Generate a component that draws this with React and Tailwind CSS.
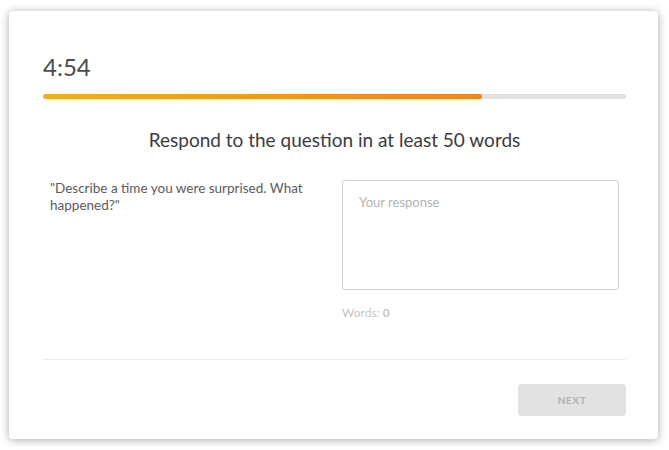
export default function App() {
    return (
        <div className="w-[669px] h-[450px] bg-white pt-[11px] pl-[9px]" style={{ fontFamily: 'Lato, "Open Sans", sans-serif' }}>
            <div className="w-[649px] h-[428px] rounded-[4px] bg-white shadow-[0_1px_8px_rgba(0,0,0,0.35)] pl-[34px] pr-[32px] pt-[40px] flex flex-col">
                <div className="text-[24px] leading-[32px] text-[#4b4b4b]">4:54</div>
                <div className="mt-[11px] h-[5px] w-full rounded-full bg-[#e0e0e0] overflow-hidden">
                    <div className="h-full w-[439px] rounded-full bg-gradient-to-r from-[#fbaa1f] to-[#f7821b]" />
                </div>
                <h1 className="mt-[27px] text-center text-[19px] leading-[28px] text-[#3c3c3c]">Respond to the question in at least 50 words</h1>
                <div className="mt-[26px] flex">
                    <div className="w-[299px] pl-[7px] pr-[16px] text-[13.5px] leading-[17px] text-[#5b5b5b]">
                        "Describe a time you were surprised. What happened?"
                    </div>
                    <div className="w-[277px]">
                        <textarea
                            placeholder="Your response"
                            className="block w-full h-[110px] resize-none rounded-[3px] border border-[#d0d0d0] px-[16px] py-[13px] text-[13px] leading-[17px] text-[#4b4b4b] placeholder:text-[#b4b4b4] outline-none"
                        />
                        <div className="mt-[15px] text-[12px] leading-[16px] text-[#c4c4c4]">
                            Words: <span className="font-bold">0</span>
                        </div>
                    </div>
                </div>
                <div className="mt-[38px] h-px bg-[#ececec]" />
                <div className="mt-[24px] flex justify-end">
                    <button className="w-[108px] h-[32px] rounded-[4px] bg-[#e2e2e2] text-[10px] font-bold tracking-[0.06em] text-[#b0b0b0]">NEXT</button>
                </div>
            </div>
        </div>
    );
}
